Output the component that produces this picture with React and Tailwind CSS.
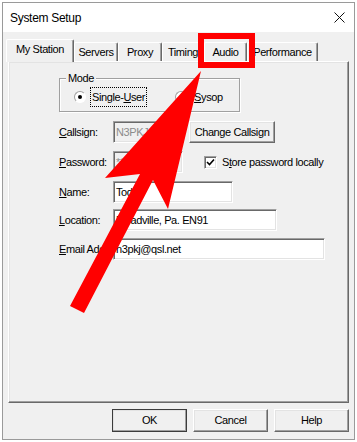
import React from "react";

const raised =
  "border border-t-white border-l-white border-r-[#696969] border-b-[#696969] shadow-[inset_-1px_-1px_0_#a0a0a0,inset_1px_1px_0_#e3e3e3]";
const sunken =
  "border border-t-[#a0a0a0] border-l-[#a0a0a0] border-r-white border-b-white shadow-[inset_1px_1px_0_#696969,inset_-1px_-1px_0_#e3e3e3]";

const tabs = [
  { label: "My Station", w: "w-[68px]", active: true },
  { label: "Servers", w: "w-[44px]" },
  { label: "Proxy", w: "w-[44px]" },
  { label: "Timing", w: "w-[42px]" },
  { label: "Audio", w: "w-[43px]" },
  { label: "Performance", w: "w-[71px]" }
];

// underlined access key
const K = ({ children }) => <span className="underline underline-offset-[1px] decoration-1">{children}</span>;

const Field = ({ w, value, disabled }) => (
  <div
    className={`relative h-[22px] ${w} ${sunken} ${
      disabled ? "bg-[#f0f0f0] text-[#8c8c8c]" : "bg-white text-black"
    } flex items-center pl-[2px] whitespace-nowrap overflow-hidden`}
  >
    {value}
  </div>
);

const Label = ({ children }) => (
  <div className="w-[54px] shrink-0 whitespace-nowrap">{children}</div>
);

const Radio = ({ checked }) => (
  <div className={`w-[12px] h-[12px] rounded-full bg-white border border-t-[#a0a0a0] border-l-[#a0a0a0] border-r-white border-b-white flex items-center justify-center shrink-0`}>
    {checked && <div className="w-[4px] h-[4px] rounded-full bg-black" />}
  </div>
);

export default function App() {
  return (
    <div className="relative w-[357px] h-[442px] bg-white pt-[2px] pl-[2px] font-['Liberation_Sans',Arial,sans-serif] text-[11px] tracking-[-0.4px] text-black overflow-hidden">
      <div className="w-[353px] h-[438px] border border-[#9a9a9a] flex flex-col">
        {/* Title bar */}
        <div className="h-[29px] bg-white flex items-center justify-between pl-[7px] pr-[8px]">
          <span className="text-[12px] tracking-[-0.3px]">System Setup</span>
          <svg width="11" height="11" viewBox="0 0 11 11" className="mr-[1px]">
            <path d="M0.5 0.5 L10.5 10.5 M10.5 0.5 L0.5 10.5" stroke="#111" strokeWidth="1" />
          </svg>
        </div>

        {/* Client area */}
        <div className="flex-1 bg-[#f0f0f0] px-[5px] flex flex-col">
          {/* Tabs */}
          <div className="mt-[7px] h-[22px] flex items-end -ml-[2px]">
            {tabs.map((t) =>
              t.active ? (
                <div
                  key={t.label}
                  className={`relative z-10 ${t.w} h-[23px] -mb-[1px] bg-[#f0f0f0] border-t border-l border-r border-t-white border-l-white border-r-[#696969] shadow-[inset_-1px_0_0_#a0a0a0] rounded-t-[2px] flex items-center justify-center pb-[3px]`}
                >
                  {t.label}
                </div>
              ) : (
                <div
                  key={t.label}
                  className={`${t.w} h-[19px] bg-[#f0f0f0] border-t border-l border-r border-t-white border-l-white border-r-[#696969] shadow-[inset_-1px_0_0_#a0a0a0] rounded-t-[2px] flex items-center justify-center`}
                >
                  {t.label}
                </div>
              )
            )}
          </div>

          {/* Tab page */}
          <div className={`h-[342px] ${raised} pl-[50px] pt-[16px] flex flex-col`}>
            {/* Mode group */}
            <div className="relative w-[181px] h-[34px] border border-[#a0a0a0] shadow-[inset_1px_1px_0_#fff,1px_1px_0_#fff] flex items-center pt-[4px] pl-[14px]">
              <span className="absolute left-[6px] -top-[7px] px-[2px] bg-[#f0f0f0] leading-[13px]">Mode</span>
              <Radio checked />
              <span className="ml-[5px] px-[1px] py-[1px] outline outline-1 outline-dotted outline-black">
                Single-<K>U</K>ser
              </span>
              <div className="ml-[29px]">
                <Radio />
              </div>
              <span className="ml-[7px]">
                <K>S</K>ysop
              </span>
            </div>

            {/* Callsign */}
            <div className="mt-[9px] h-[22px] flex items-center">
              <Label>
                <K>C</K>allsign:
              </Label>
              <Field w="w-[70px]" value="N3PKJ" disabled />
              <button className={`ml-[6px] w-[86px] h-[22px] bg-[#f0f0f0] ${raised} flex items-center justify-center tracking-[-0.4px]`}>
                Chan<K>g</K>e Callsign
              </button>
            </div>

            {/* Password */}
            <div className="mt-[8px] h-[22px] flex items-center">
              <Label>
                <K>P</K>assword:
              </Label>
              <Field w="w-[70px]" value="********" disabled />
              <div className={`ml-[21px] w-[13px] h-[13px] bg-white ${sunken} flex items-center justify-center`}>
                <svg width="9" height="9" viewBox="0 0 9 9">
                  <path d="M1 4 L3.5 6.5 L8 1.5" stroke="#000" strokeWidth="1.6" fill="none" />
                </svg>
              </div>
              <span className="ml-[5px]">
                S<K>t</K>ore password locally
              </span>
            </div>

            {/* Name */}
            <div className="mt-[8px] h-[22px] flex items-center">
              <Label>
                <K>N</K>ame:
              </Label>
              <Field w="w-[120px]" value="Todd" />
            </div>

            {/* Location */}
            <div className="mt-[6px] h-[22px] flex items-center">
              <Label>
                <K>L</K>ocation:
              </Label>
              <Field w="w-[164px]" value="Meadville, Pa. EN91" />
            </div>

            {/* Email */}
            <div className="mt-[7px] h-[22px] flex items-center">
              <Label>
                <K>E</K>mail Address:
              </Label>
              <Field w="w-[212px]" value="n3pkj@qsl.net" />
            </div>
          </div>

          {/* Dialog buttons */}
          <div className="mt-[6px] flex justify-end gap-[6px]">
            <button className={`w-[75px] h-[23px] bg-[#f0f0f0] ${raised} outline outline-1 outline-[#3c3c3c] -outline-offset-1 flex items-center justify-center`}>
              OK
            </button>
            <button className={`w-[75px] h-[23px] bg-[#f0f0f0] ${raised} flex items-center justify-center`}>
              Cancel
            </button>
            <button className={`w-[75px] h-[23px] bg-[#f0f0f0] ${raised} flex items-center justify-center`}>
              Help
            </button>
          </div>
        </div>
      </div>

      {/* Annotation: highlight box around the Audio tab */}
      <div className="absolute left-[198px] top-[33px] w-[57px] h-[35px] border-[6px] border-[#ff0000] pointer-events-none" />

      {/* Annotation: big red arrow */}
      <svg className="absolute left-0 top-0 pointer-events-none" width="357" height="442" viewBox="0 0 357 442">
        <polygon
          points="201,71 168,209 153,180 84,313 70,306 140,174 105,178"
          fill="#ff0000"
        />
      </svg>
    </div>
  );
}
